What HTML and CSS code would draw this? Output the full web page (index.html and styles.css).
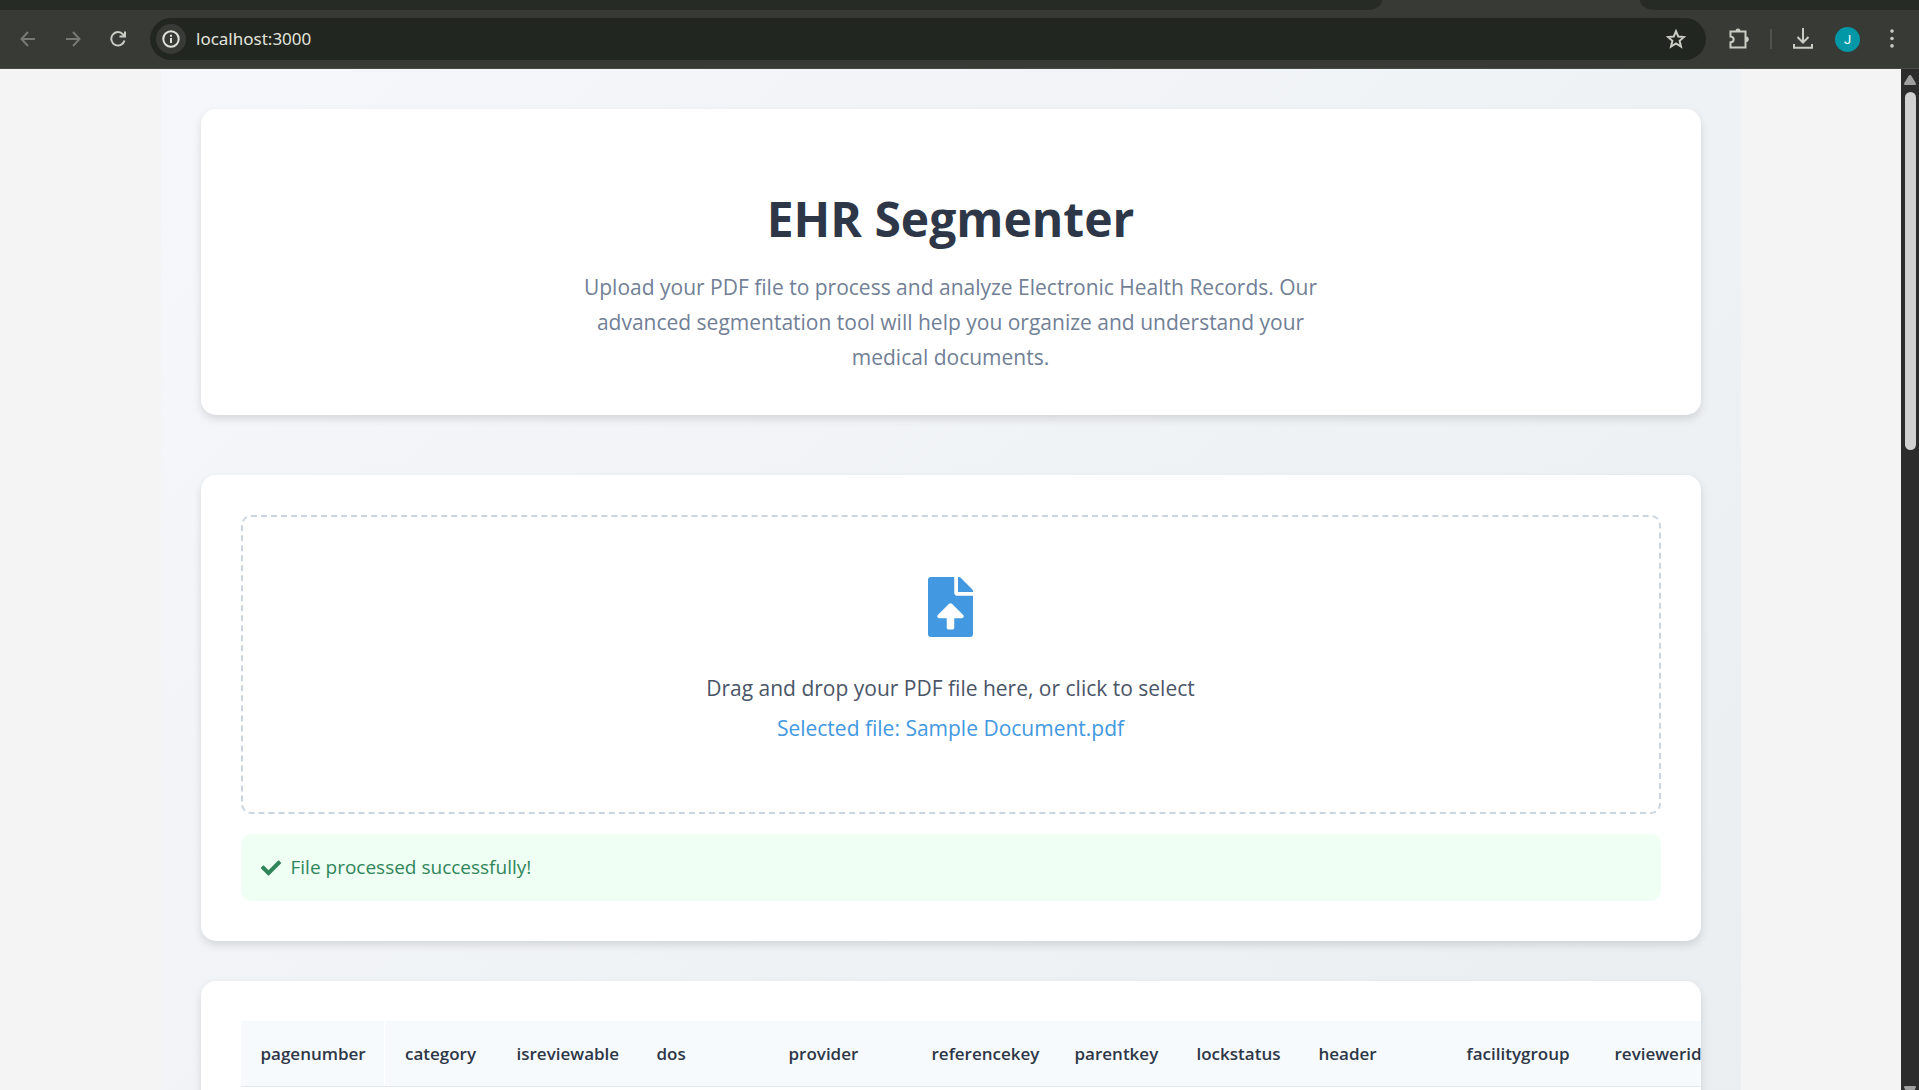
FILE: index.html
```html
<!DOCTYPE html>
<html lang="en">
<head>
<meta charset="utf-8">
<title>EHR Segmenter</title>
<link rel="stylesheet" href="styles.css">
</head>
<body>
<header class="browser">
  <div class="tabstrip"><div class="tabs-left"></div><div class="tabs-right"></div></div>
  <div class="toolbar">
    <div class="nav">
      <button class="tool dim" type="button" aria-label="Back"><svg width="16" height="16" viewBox="0 0 16 16"><path d="M15 8H2M8 1L1.500 8L8 15"/></svg></button>
      <button class="tool dim" type="button" aria-label="Forward"><svg width="16" height="16" viewBox="0 0 16 16"><path d="M1 8h13M8 1l6.500 7L8 15"/></svg></button>
      <button class="tool" type="button" aria-label="Reload"><svg width="16" height="16" viewBox="0 0 16 16"><path d="M14.500 9.500A6.700 6.700 0 1 1 13 3.300L15 5.500M15 0.500V5.500H9.500"/></svg></button>
    </div>
    <div class="omnibox">
      <button class="site-info" type="button" aria-label="View site information"><svg width="18" height="18" viewBox="0 0 18 18"><circle cx="9" cy="9" r="7.700"/><path d="M9 8v5M9 4.800v2"/></svg></button>
      <input class="address" type="text" aria-label="Address" value="localhost:3000">
      <button class="tool star" type="button" aria-label="Bookmark"><svg width="20" height="20" viewBox="0 0 20 20"><path d="M10 2.200L12.200 7.500L18 8L13.600 11.800L15 17.600L10 14.500L5 17.600L6.400 11.800L2 8L7.800 7.500Z"/></svg></button>
    </div>
    <div class="actions">
      <button class="tool" type="button" aria-label="Extensions"><svg width="22" height="22" viewBox="0 0 22 22"><path d="M3 3.500h14.500v16H2.500v-5.200c4.200-.5 4.200-5.300 0-5.800V3.500Z"/><path class="solid" d="M7.500 3.500a2.500 3 0 0 1 5 0ZM18 8.500a2.800 2.800 0 0 1 0 5.600Z"/></svg></button>
      <span class="divider"></span>
      <button class="tool" type="button" aria-label="Downloads"><svg width="22" height="22" viewBox="0 0 22 22"><path d="M11 0v14M5.500 9l5.500 5.500L16.500 9M2 16v3.800h18V16"/></svg></button>
      <button class="avatar" type="button" aria-label="Profile">J</button>
      <button class="tool" type="button" aria-label="Menu"><svg width="6" height="20" viewBox="0 0 6 20"><path class="solid" d="M3 .3a1.800 1.800 0 1 1 0 3.600a1.800 1.800 0 1 1 0-3.600ZM3 7.700a1.800 1.800 0 1 1 0 3.600a1.800 1.800 0 1 1 0-3.600ZM3 15.100a1.800 1.800 0 1 1 0 3.600a1.800 1.800 0 1 1 0-3.600Z"/></svg></button>
    </div>
  </div>
</header>
<div class="viewport">
  <div class="page">
    <main class="container">
      <section class="card hero">
        <h1>EHR Segmenter</h1>
        <p>Upload your PDF file to process and analyze Electronic Health Records. Our advanced segmentation tool will help you organize and understand your medical documents.</p>
      </section>
      <section class="card upload">
        <label class="dropzone">
          <input class="file-input" type="file" accept="application/pdf">
          <svg class="file-icon" width="45" height="60" viewBox="0 0 384 512"><path d="M224 136V0H24C10.700 0 0 10.700 0 24v464c0 13.300 10.700 24 24 24h336c13.300 0 24-10.700 24-24V160H248c-13.200 0-24-10.800-24-24zm65.180 216.010H224v80c0 8.840-7.160 16-16 16h-32c-8.840 0-16-7.160-16-16v-80H94.820c-14.280 0-21.410-17.290-11.270-27.360l96.420-95.700c6.650-6.610 17.390-6.610 24.040 0l96.420 95.700c10.150 10.070 3.030 27.360-11.250 27.360zM377 105L279.100 7c-4.500-4.500-10.600-7-17-7H256v128h128v-6.100c0-6.300-2.500-12.400-7-16.900z"/></svg>
          <span class="prompt">Drag and drop your PDF file here, or click to select</span>
          <span class="selected">Selected file: Sample Document.pdf</span>
        </label>
        <div class="status" role="status">
          <svg width="20" height="20" viewBox="0 0 512 512"><path d="M173.898 439.404l-166.400-166.400c-9.997-9.997-9.997-26.206 0-36.204l36.203-36.204c9.997-9.998 26.207-9.998 36.204 0L192 312.690 432.095 72.596c9.997-9.997 26.207-9.997 36.204 0l36.203 36.204c9.997 9.997 9.997 26.206 0 36.204l-294.400 294.401c-9.998 9.997-26.207 9.997-36.204-.001z"/></svg>
          <span>File processed successfully!</span>
        </div>
      </section>
      <section class="card results">
        <table>
          <colgroup><col class="w-page"><col class="w-category"><col class="w-review"><col class="w-dos"><col class="w-key"><col class="w-key"><col class="w-short"><col class="w-short"><col class="w-wide"><col class="w-wide"><col></colgroup>
          <thead>
            <tr><th scope="col">pagenumber</th><th scope="col">category</th><th scope="col">isreviewable</th><th scope="col">dos</th><th scope="col">provider</th><th scope="col">referencekey</th><th scope="col">parentkey</th><th scope="col">lockstatus</th><th scope="col">header</th><th scope="col">facilitygroup</th><th scope="col">reviewerid</th></tr>
          </thead>
        </table>
      </section>
    </main>
  </div>
  <div class="scrollbar">
    <svg width="12" height="10" viewBox="0 0 12 10"><path d="M6 0Q7 0 7.500 1L12 8.500Q12 10 11 10H1Q0 10 0 8.500L4.500 1Q5 0 6 0Z"/></svg>
    <div class="track"><div class="thumb"></div></div>
    <svg class="down" width="12" height="10" viewBox="0 0 12 10"><path d="M1 0H11Q12 0 12 1.500L7.500 9Q6 11 4.500 9L0 1.500Q0 0 1 0Z"/></svg>
  </div>
</div>
</body>
</html>
```
FILE: styles.css
```css
* { box-sizing: border-box; }

body {
  margin: 0;
  height: 100vh;
  display: flex;
  flex-direction: column;
  overflow: hidden;
  font-family: "Segoe UI", "Open Sans", sans-serif;
  background: #f4f4f4;
}

button { padding: 0; border: 0; background: none; font: inherit; }

/* Browser frame */
.browser { flex: none; background: #383b35; border-bottom: 1px solid #484a45; }
.tabstrip { display: flex; justify-content: space-between; height: 10px; }
.tabs-left { width: 72%; background: #272b26; border-bottom-right-radius: 14px 10px; }
.tabs-right { width: 279px; background: #272b26; border-bottom-left-radius: 14px 10px; }
.toolbar { display: flex; align-items: center; height: 58px; padding: 0 24px 0 20px; }
.nav { display: flex; gap: 29px; width: 130px; }
.tool { display: flex; color: #c9ccc3; }
.tool svg, .site-info svg { fill: none; stroke: currentColor; stroke-width: 2; }
.tool .solid { fill: currentColor; stroke: none; }
.dim { color: #777a73; }
.omnibox {
  flex: 1;
  display: flex;
  align-items: center;
  height: 42px;
  padding: 0 20px 0 6px;
  border-radius: 21px;
  background: #222621;
}
.site-info {
  display: flex;
  align-items: center;
  justify-content: center;
  width: 30px;
  height: 30px;
  border-radius: 50%;
  background: #383b35;
  color: #dfe1d9;
}
.address {
  flex: 1;
  padding: 0 10px;
  border: 0;
  background: none;
  color: #e2e4dc;
  font: 17px/24px "Segoe UI", "Noto Sans", sans-serif;
}
.actions { display: flex; align-items: center; padding-left: 22px; }
.divider { width: 2px; height: 20px; margin: 0 20px; background: #50534c; }
.avatar {
  width: 25px;
  height: 25px;
  margin: 0 29px 0 21px;
  border-radius: 50%;
  background: #0097a7;
  color: #fff;
  font: 13px/25px Roboto, sans-serif;
}

/* Page */
.viewport { flex: 1; display: flex; min-height: 0; }
.page { flex: 1; overflow: hidden; }
.container {
  max-width: 1580px;
  min-height: 100%;
  margin: 0 auto;
  padding: 40px;
  background: linear-gradient(135deg, #f5f7fb, #eaeef1 1850px);
}
.card {
  padding: 40px;
  border-radius: 15px;
  background: #fff;
  box-shadow: 0 4px 8px rgba(0, 0, 0, 0.12);
}
.hero { margin-bottom: 60px; text-align: center; }
.hero h1 {
  margin: 40px 0 21px;
  color: #2d3748;
  font-size: 48px;
  line-height: 60px;
}
.hero p {
  max-width: 750px;
  margin: 0 auto;
  color: #718096;
  font-size: 21px;
  line-height: 35px;
}
.upload { margin-bottom: 40px; }
.dropzone {
  display: flex;
  flex-direction: column;
  align-items: center;
  padding: 60px;
  border: 2px dashed #cbd5e0;
  border-radius: 10px;
  font-size: 21px;
  line-height: 35px;
}
.file-input { position: absolute; opacity: 0; width: 1px; height: 1px; }
.file-icon { margin-bottom: 34px; fill: #4299e1; }
.prompt { margin-bottom: 5px; color: #4a5568; }
.selected { margin-bottom: 6px; color: #4299e1; }
.status {
  display: flex;
  align-items: center;
  gap: 10px;
  margin-top: 20px;
  padding: 20px;
  border-radius: 10px;
  background: #f0fff4;
  color: #2f855a;
  font-size: 19px;
  line-height: 27px;
}
.status svg { fill: currentColor; }

/* Results table */
.results { overflow: hidden; }
table { width: 1480px; table-layout: fixed; border-collapse: collapse; }
th {
  height: 65px;
  padding: 0 0 0 20px;
  border-bottom: 1px solid #e2e8f0;
  background: #f7fafc;
  color: #2d3748;
  font-size: 17px;
  font-weight: 600;
  text-align: left;
}
th:first-child { border-right: 1px solid #fff; }
.w-page { width: 144px; }
.w-category { width: 112px; }
.w-review { width: 140px; }
.w-dos { width: 132px; }
.w-key { width: 143px; }
.w-short { width: 122px; }
.w-wide { width: 148px; }

/* Scrollbar */
.scrollbar {
  display: flex;
  flex-direction: column;
  align-items: center;
  width: 18px;
  padding: 6px 0 0;
  background: #2c2c2c;
}
.scrollbar svg { flex: none; fill: #9f9f9f; }
.track { flex: 1; padding-top: 7px; }
.thumb { width: 11px; height: 36%; border-radius: 6px; background: #d1d1d1; }
.down { margin-bottom: -6px; }
```
